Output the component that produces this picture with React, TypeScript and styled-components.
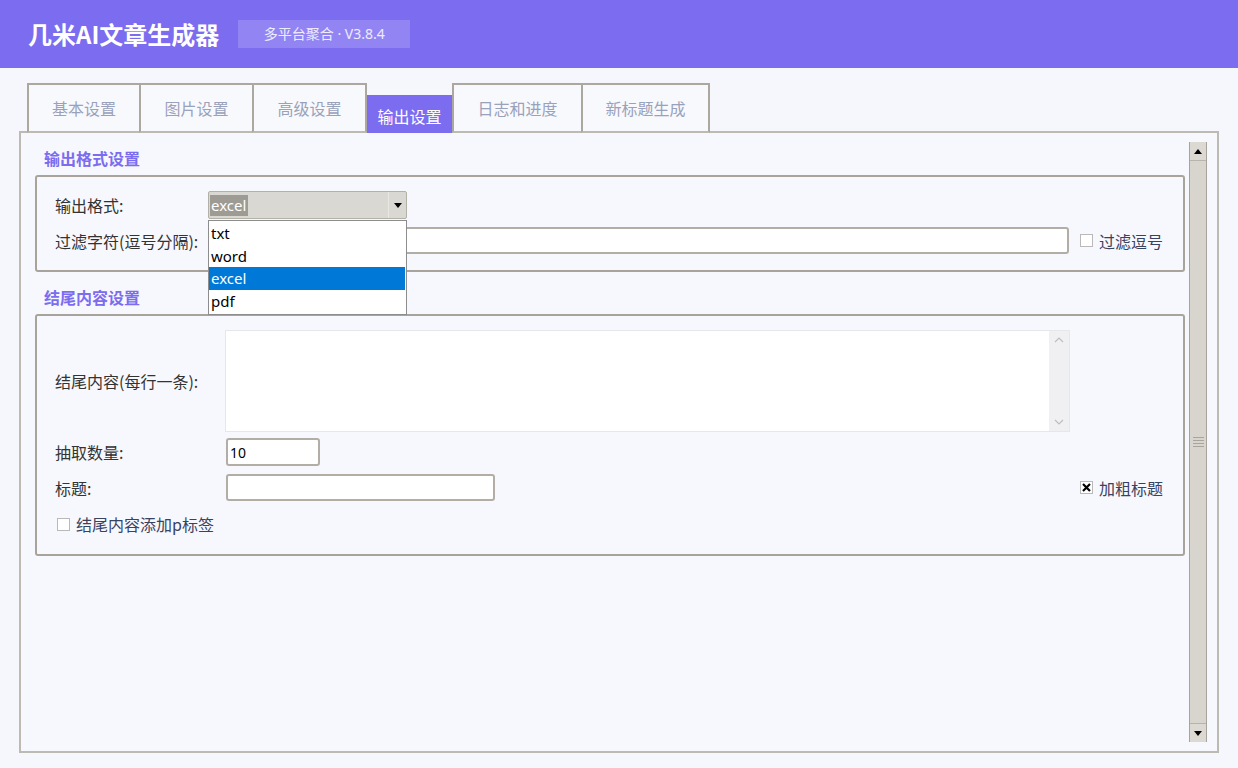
import React from "react";
import styled, { createGlobalStyle, css } from "styled-components";

const GlobalStyle = createGlobalStyle`
  html, body {
    margin: 0;
    padding: 0;
    background: #f6f7fd;
  }
  body {
    font-family: "Noto Sans", "Noto Sans CJK SC", sans-serif;
    color: #333;
  }
  * { box-sizing: border-box; }
`;

const Page = styled.div`
  width: 1238px;
  height: 768px;
  background: #f6f7fd;
  overflow: hidden;
`;

const Header = styled.header`
  height: 68px;
  background: #7b6cf0;
  display: flex;
  align-items: center;
  padding-left: 28px;
  gap: 19px;
`;

const AppTitle = styled.h1`
  margin: 0;
  font-family: "Noto Sans CJK SC", sans-serif;
  font-size: 24px;
  font-weight: 700;
  color: #fff;
  line-height: 30px;
`;

const VersionBadge = styled.span`
  width: 172px;
  height: 28px;
  background: #9285f3;
  color: #eeebff;
  font-size: 14px;
  line-height: 28px;
  text-align: center;
  font-family: "Noto Sans", "Noto Sans CJK SC", sans-serif;
`;

const Body = styled.main`
  padding: 15px 0 0 19px;
`;

const TabBar = styled.nav`
  display: flex;
  align-items: flex-end;
  height: 50px;
  margin-left: 8px;
  margin-bottom: -2px;
  position: relative;
  z-index: 1;
`;

const Tab = styled.div<{ $w: number; $active?: boolean }>`
  width: ${(p) => p.$w}px;
  margin-left: -2px;
  display: flex;
  align-items: center;
  justify-content: center;
  font-size: 16px;
  font-family: "Noto Sans CJK SC", sans-serif;
  ${(p) =>
    p.$active
      ? css`
          height: 38px;
          background: #7b6cf0;
          color: #fff;
          padding-top: 3px;
          border: none;
          margin-left: 0;
          margin-right: 2px;
        `
      : css`
          height: 50px;
          background: #f8f9fd;
          color: #9aa2bb;
          border: 2px solid #aca89f;
          border-bottom-color: #bdbab3;
          padding-bottom: 1px;
        `}
  &:first-child {
    margin-left: 0;
  }
`;

const Panel = styled.section`
  width: 1200px;
  height: 622px;
  border: 2px solid #bdbab3;
  background: #f7f8fd;
  display: flex;
`;

const Content = styled.div`
  flex: 1;
  padding: 14px 4px 0 14px;
`;

const SectionTitle = styled.h2<{ $gap?: number }>`
  margin: ${(p) => p.$gap ?? 0}px 0 6px 9px;
  font-family: "Noto Sans CJK SC", sans-serif;
  font-size: 16px;
  line-height: 22px;
  font-weight: 600;
  color: #7b6cf0;
`;

const GroupBox = styled.div<{ $label: number; $pt: number; $pb: number }>`
  position: relative;
  border: 2px solid #a8a49c;
  border-radius: 3px;
  display: grid;
  grid-template-columns: ${(p) => p.$label}px 1fr auto;
  column-gap: 11px;
  align-items: center;
  padding: ${(p) => p.$pt}px 20px ${(p) => p.$pb}px 18px;
`;

const Label = styled.label<{ $top?: number }>`
  font-family: "Noto Sans CJK SC", sans-serif;
  font-size: 16px;
  line-height: 22px;
  color: #333;
  margin-right: -11px;
  margin-top: ${(p) => p.$top ?? 0}px;
  white-space: nowrap;
`;

const FullRow = styled.div<{ $top?: number }>`
  grid-column: 1 / -1;
  margin-top: ${(p) => p.$top ?? 0}px;
`;

const Select = styled.div`
  position: relative;
  width: 199px;
  height: 28px;
  background: #dad8d3;
  border: 1px solid #b3b0a8;
  border-radius: 2px;
  display: flex;
  align-items: center;
`;

const SelectValue = styled.span`
  flex: 1;
  display: flex;
  align-items: center;
  padding-left: 1px;
`;

const SelectedText = styled.span`
  background: #9e9b94;
  color: #fff;
  font-size: 15px;
  line-height: 21px;
  padding: 0 2px 0 1px;
`;

const SelectArrow = styled.span`
  width: 18px;
  height: 100%;
  border-left: 1px solid #e9e7e2;
  display: flex;
  align-items: center;
  justify-content: center;
`;

const Arrow = styled.span<{ $up?: boolean }>`
  width: 0;
  height: 0;
  border-left: 4px solid transparent;
  border-right: 4px solid transparent;
  ${(p) =>
    p.$up
      ? css`border-bottom: 5px solid #000;`
      : css`border-top: 5px solid #000;`}
`;

const DropList = styled.ul`
  position: absolute;
  left: -1px;
  top: 28px;
  width: 199px;
  margin: 0;
  padding: 1px 0 2px;
  list-style: none;
  background: #fff;
  border: 1px solid #8d8d8d;
  z-index: 5;
`;

const DropItem = styled.li<{ $active?: boolean }>`
  height: 22.5px;
  line-height: 22px;
  padding-left: 2px;
  font-size: 15px;
  color: ${(p) => (p.$active ? "#fff" : "#000")};
  background: ${(p) => (p.$active ? "#0078d7" : "transparent")};
  margin-right: 1px;
`;

const TextInput = styled.input<{ $w?: number; $h?: number; $top?: number }>`
  width: ${(p) => (p.$w ? `${p.$w}px` : "100%")};
  height: ${(p) => p.$h ?? 27}px;
  margin-top: ${(p) => p.$top ?? 0}px;
  border: 2px solid #b2aea6;
  border-radius: 3px;
  background: #fff;
  padding: 0 2px;
  font-family: "Noto Sans", sans-serif;
  font-size: 14px;
  color: #000;
  outline: none;
`;

const CheckLabel = styled.label<{ $top?: number; $left?: number }>`
  display: flex;
  align-items: center;
  gap: 6px;
  margin-top: ${(p) => p.$top ?? 0}px;
  margin-left: ${(p) => p.$left ?? 0}px;
  font-family: "Noto Sans CJK SC", sans-serif;
  font-size: 16px;
  line-height: 22px;
  color: #3a4262;
  white-space: nowrap;
`;

const Box = styled.span`
  width: 13px;
  height: 13px;
  border: 1px solid #b9b9b9;
  background: #fff;
  display: inline-flex;
  align-items: center;
  justify-content: center;
`;

const TextBox = styled.div`
  height: 102px;
  border: 1px solid #e6e7ec;
  background: #fff;
  display: flex;
  margin-left: -1px;
  margin-right: -1px;
`;

const Area = styled.textarea`
  flex: 1;
  border: none;
  resize: none;
  outline: none;
  background: transparent;
`;

const InnerScroll = styled.div`
  width: 20px;
  background: #f0f0f3;
  display: flex;
  flex-direction: column;
  justify-content: space-between;
  align-items: center;
  padding: 5px 0;
`;

const ScrollBar = styled.div`
  width: 18px;
  margin: 9px 10px 9px 0;
  background: #d8d5ce;
  border-left: 1px solid #a7a39b;
  border-right: 1px solid #a7a39b;
  display: flex;
  flex-direction: column;
`;

const ScrollButton = styled.div<{ $end?: boolean }>`
  height: 19px;
  display: flex;
  align-items: center;
  justify-content: center;
  background: #dcd9d2;
  ${(p) =>
    p.$end
      ? css`border-top: 1px solid #b8b4ac;`
      : css`border-bottom: 1px solid #b8b4ac;`}
`;

const ScrollTrack = styled.div`
  flex: 1;
  display: flex;
  align-items: center;
  justify-content: center;
`;

const Grip = styled.div`
  width: 11px;
  height: 10px;
  background: repeating-linear-gradient(
    to bottom,
    #a9a59d 0,
    #a9a59d 1px,
    transparent 1px,
    transparent 3px
  );
`;

const Chevron = ({ up }: { up?: boolean }) => (
  <svg width="10" height="7" viewBox="0 0 10 7">
    <path
      d={up ? "M1 6 L5 2 L9 6" : "M1 1 L5 5 L9 1"}
      fill="none"
      stroke="#bdbdc2"
      strokeWidth="1.2"
    />
  </svg>
);

const Checkbox = ({ checked }: { checked?: boolean }) => (
  <Box>
    {checked && (
      <svg width="9" height="9" viewBox="0 0 9 9">
        <path d="M1 1 L8 8 M8 1 L1 8" stroke="#000" strokeWidth="2.2" />
      </svg>
    )}
  </Box>
);

const tabs = [
  { name: "基本设置", w: 114 },
  { name: "图片设置", w: 115 },
  { name: "高级设置", w: 115 },
  { name: "输出设置", w: 85, active: true },
  { name: "日志和进度", w: 131 },
  { name: "新标题生成", w: 129 },
];

const formats = ["txt", "word", "excel", "pdf"];

export default function App() {
  return (
    <Page>
      <GlobalStyle />
      <Header>
        <AppTitle>几米AI文章生成器</AppTitle>
        <VersionBadge>多平台聚合 · V3.8.4</VersionBadge>
      </Header>
      <Body>
        <TabBar>
          {tabs.map((t) => (
            <Tab key={t.name} $w={t.w} $active={t.active}>
              {t.name}
            </Tab>
          ))}
        </TabBar>
        <Panel>
          <Content>
            <SectionTitle>输出格式设置</SectionTitle>
            <GroupBox $label={142} $pt={14} $pb={16}>
              <Label>输出格式:</Label>
              <Select>
                <SelectValue>
                  <SelectedText>excel</SelectedText>
                </SelectValue>
                <SelectArrow>
                  <Arrow />
                </SelectArrow>
                <DropList>
                  {formats.map((f) => (
                    <DropItem key={f} $active={f === "excel"}>
                      {f}
                    </DropItem>
                  ))}
                </DropList>
              </Select>
              <span />
              <Label $top={8}>过滤字符(逗号分隔):</Label>
              <TextInput $top={8} />
              <CheckLabel $top={8}>
                <Checkbox />
                过滤逗号
              </CheckLabel>
            </GroupBox>

            <SectionTitle $gap={14}>结尾内容设置</SectionTitle>
            <GroupBox $label={160} $pt={14} $pb={19}>
              <Label>结尾内容(每行一条):</Label>
              <TextBox>
                <Area />
                <InnerScroll>
                  <Chevron up />
                  <Chevron />
                </InnerScroll>
              </TextBox>
              <span />
              <Label $top={6}>抽取数量:</Label>
              <TextInput $w={94} $h={28} $top={6} defaultValue="10" />
              <span />
              <Label $top={8}>标题:</Label>
              <TextInput $w={269} $top={8} />
              <CheckLabel $top={8}>
                <Checkbox checked />
                加粗标题
              </CheckLabel>
              <FullRow $top={12}>
                <CheckLabel $left={2}>
                  <Checkbox />
                  结尾内容添加p标签
                </CheckLabel>
              </FullRow>
            </GroupBox>
          </Content>
          <ScrollBar>
            <ScrollButton>
              <Arrow $up />
            </ScrollButton>
            <ScrollTrack>
              <Grip />
            </ScrollTrack>
            <ScrollButton $end>
              <Arrow />
            </ScrollButton>
          </ScrollBar>
        </Panel>
      </Body>
    </Page>
  );
}
